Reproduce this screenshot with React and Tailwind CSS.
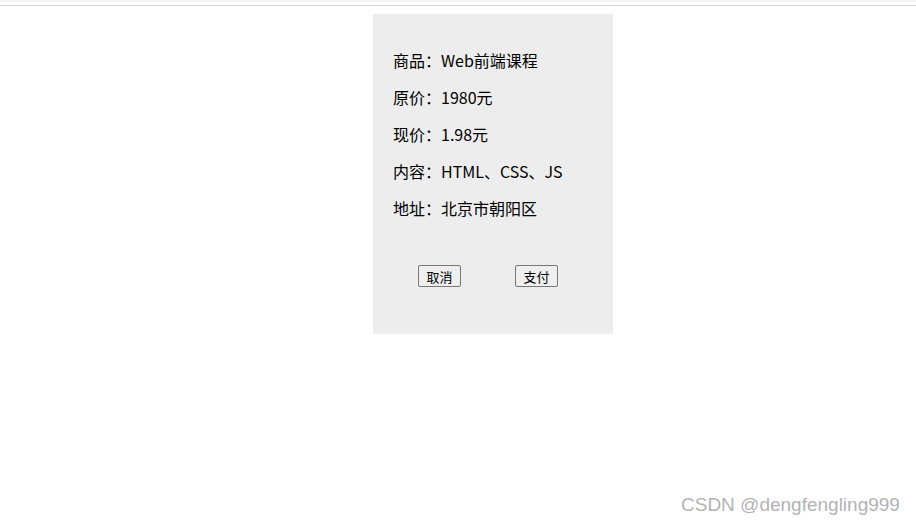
export default function App() {
  const rows = [
    ["商品：", "Web前端课程"],
    ["原价：", "1980元"],
    ["现价：", "1.98元"],
    ["内容：", "HTML、CSS、JS"],
    ["地址：", "北京市朝阳区"],
  ];
  return (
    <div
      className="w-[916px] h-[524px] bg-white relative overflow-hidden"
      style={{ fontFamily: '"Noto Sans CJK SC", "Noto Sans", sans-serif' }}
    >
      <div className="h-[2px] bg-[#f3f3f3]" />
      <div className="h-[3px]" />
      <div className="h-[1px] bg-[#d9d9d9]" />
      <div className="ml-[373px] mt-[8px] w-[240px] h-[320px] bg-[#ededed] pt-[36px] px-[20px]">
        <div className="flex flex-col gap-[16px]">
          {rows.map(([k, v]) => (
            <div key={k} className="text-[16px] leading-[21px] text-black whitespace-nowrap">
              {k}
              {v}
            </div>
          ))}
        </div>
        <div className="flex mt-[46px] pl-[25px] gap-[54px]">
          <button className="w-[43px] h-[22px] text-[13px] leading-none border border-[#767676] rounded-[2px] bg-[#efefef] text-black flex items-center justify-center">
            取消
          </button>
          <button className="w-[43px] h-[22px] text-[13px] leading-none border border-[#767676] rounded-[2px] bg-[#efefef] text-black flex items-center justify-center">
            支付
          </button>
        </div>
      </div>
      <div
        className="absolute left-[681px] top-[493px] text-[19px] leading-[24px] text-[#b3b3b3] whitespace-nowrap"
        style={{ fontFamily: '"Liberation Sans", sans-serif' }}
      >
        CSDN @dengfengling999
      </div>
    </div>
  );
}
